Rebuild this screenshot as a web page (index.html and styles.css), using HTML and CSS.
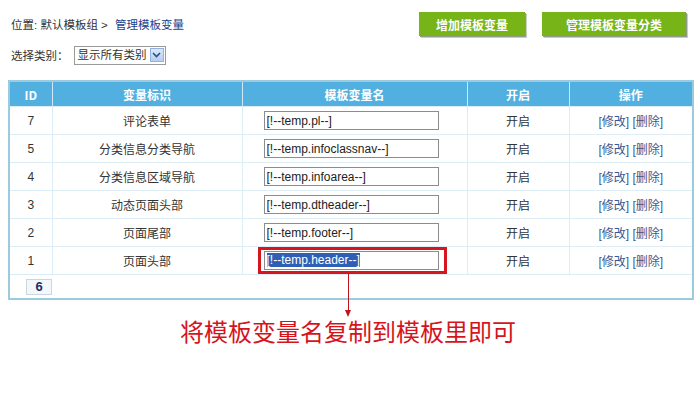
FILE: index.html
```html
<!DOCTYPE html>
<html lang="zh-CN">
<head>
  <meta charset="UTF-8" />
  <title>管理模板变量</title>
  <link rel="stylesheet" href="styles.css">
</head>
<body>
  <div class="page">
    <div class="topbar">
      <div class="crumb">位置: 默认模板组 &gt; <a href="#">管理模板变量</a></div>
      <div class="actions">
        <button class="green-btn add-btn">增加模板变量</button>
        <button class="green-btn cat-btn">管理模板变量分类</button>
      </div>
    </div>

    <div class="filter">
      <span>选择类别：</span>
      <div class="fake-select">
        <span class="sel-text">显示所有类别</span>
        <span class="sel-arrow">
          <svg width="9" height="6" viewBox="0 0 9 6"><path d="M1 1 L4.5 4.5 L8 1" fill="none" stroke="#2a4f8a" stroke-width="1.6"/></svg>
        </span>
      </div>
    </div>

    <table class="var-table">
      <colgroup>
        <col style="width:43px">
        <col style="width:190px">
        <col style="width:225px">
        <col style="width:102px">
        <col style="width:124px">
      </colgroup>
      <thead>
        <tr><th>ID</th><th>变量标识</th><th>模板变量名</th><th>开启</th><th>操作</th></tr>
      </thead>
      <tbody>
        <tr><td>7</td><td>评论表单</td><td><input class="var-input" value="[!--temp.pl--]"></td><td>开启</td><td class="ops"><a href="#">[修改]</a> <a href="#">[删除]</a></td></tr>
        <tr><td>5</td><td>分类信息分类导航</td><td><input class="var-input" value="[!--temp.infoclassnav--]"></td><td>开启</td><td class="ops"><a href="#">[修改]</a> <a href="#">[删除]</a></td></tr>
        <tr><td>4</td><td>分类信息区域导航</td><td><input class="var-input" value="[!--temp.infoarea--]"></td><td>开启</td><td class="ops"><a href="#">[修改]</a> <a href="#">[删除]</a></td></tr>
        <tr><td>3</td><td>动态页面头部</td><td><input class="var-input" value="[!--temp.dtheader--]"></td><td>开启</td><td class="ops"><a href="#">[修改]</a> <a href="#">[删除]</a></td></tr>
        <tr><td>2</td><td>页面尾部</td><td><input class="var-input" value="[!--temp.footer--]"></td><td>开启</td><td class="ops"><a href="#">[修改]</a> <a href="#">[删除]</a></td></tr>
        <tr><td>1</td><td>页面头部</td><td class="marked"><div class="red-box"><div class="var-input sel-input"><span class="hl">[!--temp.header--]</span></div></div><div class="arrow"></div></td><td>开启</td><td class="ops"><a href="#">[修改]</a> <a href="#">[删除]</a></td></tr>
        <tr class="foot"><td colspan="5"><span class="count">6</span></td></tr>
      </tbody>
    </table>

    <p class="note">将模板变量名复制到模板里即可</p>
  </div>
</body>
</html>
```

FILE: styles.css
```css
body {
  margin: 0;
  background: #fff;
  font-family: "Liberation Sans", "Noto Sans CJK SC", sans-serif;
  font-size: 12px;
  color: #333;
}
.page {
  padding: 12px 8px 0 8px;
}
.topbar {
  display: flex;
  justify-content: space-between;
  align-items: flex-start;
  height: 33px;
}
.crumb {
  padding: 6px 0 0 3px;
  line-height: 14px;
  font-size: 11.5px;
}
.crumb a {
  color: #1b3f8b;
  text-decoration: none;
  margin-left: 4px;
}
.actions {
  display: flex;
  gap: 17px;
  padding-right: 6px;
}
.green-btn {
  height: 24px;
  border: none;
  background: #76b418;
  color: #fff;
  font-family: "Noto Sans CJK SC", sans-serif;
  font-size: 12px;
  font-weight: bold;
  box-shadow: 1px 1px 0 #8f9a88, 2px 2px 0 #c9cec4;
  padding: 0;
}
.add-btn { width: 106px; }
.cat-btn { width: 144px; }

.filter {
  display: flex;
  align-items: center;
  gap: 5px;
  height: 20px;
  padding-left: 3px;
  font-size: 11.5px;
}
.fake-select {
  display: flex;
  align-items: center;
  height: 17px;
  border: 1px solid #9a9a9a;
  padding: 0 1px 0 3px;
  gap: 3px;
}
.sel-text { line-height: 16px; }
.sel-arrow {
  width: 14px;
  height: 14px;
  background: linear-gradient(#dbe8fb, #b6cdf3);
  border: 1px solid #94b0dc;
  display: flex;
  align-items: center;
  justify-content: center;
  box-sizing: border-box;
}

.var-table {
  margin-top: 15px;
  width: 684px;
  border-collapse: collapse;
  table-layout: fixed;
  border: 2px solid #9ccbe0;
}
.var-table th {
  height: 24px;
  background: #52b0e0;
  color: #fff;
  font-family: "Noto Sans CJK SC", sans-serif;
  font-weight: bold;
  border-left: 1px solid #cde9f7;
  padding: 0;
}
.var-table th:first-child { border-left: none; }
.var-table td {
  height: 27px;
  text-align: center;
  border: 1px solid #dcedf5;
  padding: 0;
}
.var-input {
  width: 175px;
  height: 19px;
  box-sizing: border-box;
  border: 1px solid #8c8c8c;
  font-family: "Liberation Sans", sans-serif;
  font-size: 12px;
  color: #222;
  padding: 0 2px;
  display: block;
  margin-left: 21px;
  text-align: left;
  background: #fff;
}
.marked { position: relative; }
.red-box {
  position: absolute;
  left: 15px;
  top: 3px;
  width: 183px;
  height: 21px;
  border: 3px solid #d5161e;
  box-sizing: content-box;
  margin: -3px 0 0 0;
}
.sel-input {
  margin: 1px 0 0 3px;
  line-height: 17px;
}
.hl {
  background: #2f5fb5;
  color: #fff;
}
.arrow {
  position: absolute;
  left: 105px;
  top: 27px;
  width: 1px;
  height: 37px;
  background: #c0131b;
}
.arrow::after {
  content: "";
  position: absolute;
  left: -3px;
  bottom: -6px;
  border-left: 3.5px solid transparent;
  border-right: 3.5px solid transparent;
  border-top: 7px solid #c0131b;
}
.ops a {
  color: #3a5892;
  text-decoration: none;
}
.foot td {
  height: 23px;
  text-align: left;
  padding-left: 16px;
}
.count {
  display: inline-block;
  width: 24px;
  height: 14px;
  line-height: 14px;
  text-align: center;
  border: 1px solid #c9d7df;
  background: #f4f7f9;
  color: #1a2f66;
  font-weight: bold;
  font-size: 13px;
}
.note {
  margin: 18px 0 0 172px;
  font-family: "Liberation Serif", "Noto Sans CJK SC", serif;
  font-size: 24px;
  color: #d5141c;
  line-height: 30px;
}
```
